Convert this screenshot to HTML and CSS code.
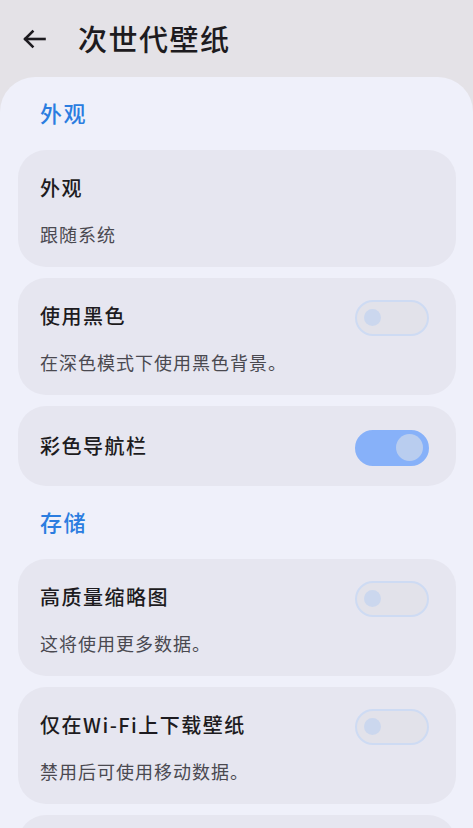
FILE: index.html
```html
<!DOCTYPE html>
<html lang="zh-CN">

<head>
  <meta charset="UTF-8">
  <meta name="viewport" content="width=device-width, initial-scale=1.0">
  <title>次世代壁纸</title>
  <link rel="stylesheet" href="styles.css">
</head>

<body>

  <header class="topbar">
    <button class="topbar__back" type="button" aria-label="返回">
      <svg width="24" height="20" viewBox="0 0 24 20" fill="none" stroke="#1d1b20" stroke-width="2.6"
        stroke-linecap="square">
        <path d="M22.5 10H3.5" />
        <path d="M10.5 2.5L3 10l7.5 7.5" />
      </svg>
    </button>
    <h1 class="topbar__title">次世代壁纸</h1>
  </header>

  <main class="sheet">
    <h2 class="sheet__section">外观</h2>

    <div class="card">
      <div class="card__row">
        <span class="card__title">外观</span>
      </div>
      <p class="card__summary">跟随系统</p>
    </div>

    <div class="card">
      <div class="card__row">
        <span class="card__title">使用黑色</span>
        <span class="switch" role="switch" aria-checked="false"><span class="switch__thumb"></span></span>
      </div>
      <p class="card__summary">在深色模式下使用黑色背景。</p>
    </div>

    <div class="card card--single">
      <div class="card__row">
        <span class="card__title">彩色导航栏</span>
        <span class="switch switch--on" role="switch" aria-checked="true"><span class="switch__thumb"></span></span>
      </div>
    </div>

    <h2 class="sheet__section">存储</h2>

    <div class="card">
      <div class="card__row">
        <span class="card__title">高质量缩略图</span>
        <span class="switch" role="switch" aria-checked="false"><span class="switch__thumb"></span></span>
      </div>
      <p class="card__summary">这将使用更多数据。</p>
    </div>

    <div class="card">
      <div class="card__row">
        <span class="card__title">仅在Wi-Fi上下载壁纸</span>
        <span class="switch" role="switch" aria-checked="false"><span class="switch__thumb"></span></span>
      </div>
      <p class="card__summary">禁用后可使用移动数据。</p>
    </div>

    <div class="card card--single"></div>
  </main>

</body>

</html>
```

FILE: styles.css
```css
*,
*:after,
*:before {
  margin: 0;
  padding: 0;
  box-sizing: border-box;
}

body {
  font-family: "Noto Sans CJK SC", "Noto Sans", sans-serif;
  background: #e4e2e7;
  color: #1d1b20;
}

.topbar {
  height: 77px;
  display: flex;
  align-items: center;
  padding: 0 0 0 22px;
}

.topbar__back {
  border: 0;
  background: none;
  display: flex;
  width: 24px;
  height: 20px;
  margin-right: 32px;
}

.topbar__title {
  font-size: 29px;
  font-weight: 500;
  letter-spacing: 1.5px;
  line-height: 1;
}

.sheet {
  background: #eff0fa;
  border-radius: 35px 35px 0 0;
  padding: 0 17px 0 18px;
  min-height: 751px;
}

.sheet__section {
  height: 73px;
  display: flex;
  align-items: center;
  padding: 0 0 4px 22px;
  font-size: 22px;
  font-weight: 500;
  letter-spacing: 1.5px;
  color: #2b7de0;
}

.card + .sheet__section {
  margin-top: -11px;
}

.card {
  background: #e6e6f0;
  border-radius: 28px;
  padding: 22px 27px 20px 22px;
  margin-bottom: 11px;
  min-height: 117px;
}

.card--single {
  min-height: 80px;
  padding-top: 24px;
  padding-bottom: 26px;
}

.card__row {
  height: 30px;
  display: flex;
  align-items: center;
  justify-content: space-between;
}

.card__title {
  font-size: 20px;
  font-weight: 500;
  letter-spacing: 1.5px;
}

.card__summary {
  margin-top: 19px;
  font-size: 18px;
  line-height: 26px;
  letter-spacing: 1px;
  color: #4a4950;
}

.switch {
  flex-shrink: 0;
  width: 74px;
  height: 36px;
  margin-top: 5px;
  border-radius: 18px;
  border: 2px solid #cedbf3;
  background: #e2e2ea;
  display: flex;
  align-items: center;
  padding-left: 7px;
}

.switch__thumb {
  width: 17px;
  height: 17px;
  border-radius: 50%;
  background: #cbd7ee;
}

.switch--on {
  border-color: #87b1f9;
  background: #87b1f9;
  justify-content: flex-end;
  padding: 0 4px 0 0;
}

.switch--on .switch__thumb {
  width: 27px;
  height: 27px;
  background: #b9cdef;
}
```
